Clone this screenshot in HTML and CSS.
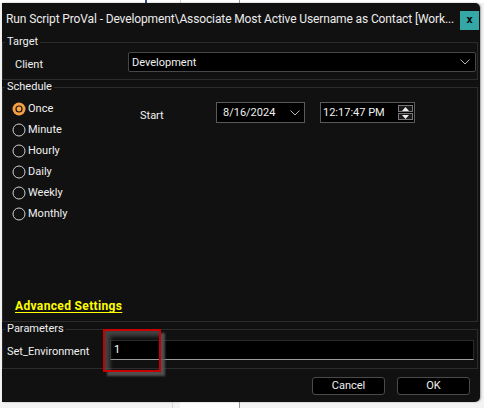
FILE: index.html
```html
<!DOCTYPE html>
<html>
<head>
<meta charset="utf-8">
<link rel="stylesheet" href="styles.css">
</head>
<body>
<div class="desk-top"></div>
<div class="window">
  <div class="titlebar">
    <div class="title">Run Script ProVal - Development\Associate Most Active Username as Contact [Work...</div>
    <div class="close">x</div>
  </div>

  <fieldset class="group group-target">
    <legend>Target</legend>
    <div class="client-row">
      <div class="client-label">Client</div>
      <div class="select">
        <span>Development</span>
        <svg class="chev" width="10" height="6" viewBox="0 0 10 6"><polyline points="0.5,0.5 5,5 9.5,0.5" fill="none" stroke="#b5b5b5" stroke-width="1"/></svg>
      </div>
    </div>
  </fieldset>

  <fieldset class="group group-schedule">
    <legend>Schedule</legend>
    <div class="schedule-body">
      <div class="schedule-top">
        <div class="radios">
          <div class="radio-row">
            <svg class="radio" width="14" height="14" viewBox="0 0 14 14"><circle cx="7" cy="7" r="6.5" fill="#f5a043"/><circle cx="7" cy="7" r="3.6" fill="#1a1208"/><circle cx="7" cy="7" r="2.4" fill="#f7a64a"/></svg>
            <span>Once</span>
          </div>
          <div class="radio-row">
            <svg class="radio" width="14" height="14" viewBox="0 0 14 14"><circle cx="7" cy="7" r="6" fill="none" stroke="#d0d0d0" stroke-width="1"/></svg>
            <span>Minute</span>
          </div>
          <div class="radio-row">
            <svg class="radio" width="14" height="14" viewBox="0 0 14 14"><circle cx="7" cy="7" r="6" fill="none" stroke="#d0d0d0" stroke-width="1"/></svg>
            <span>Hourly</span>
          </div>
          <div class="radio-row">
            <svg class="radio" width="14" height="14" viewBox="0 0 14 14"><circle cx="7" cy="7" r="6" fill="none" stroke="#d0d0d0" stroke-width="1"/></svg>
            <span>Daily</span>
          </div>
          <div class="radio-row">
            <svg class="radio" width="14" height="14" viewBox="0 0 14 14"><circle cx="7" cy="7" r="6" fill="none" stroke="#d0d0d0" stroke-width="1"/></svg>
            <span>Weekly</span>
          </div>
          <div class="radio-row">
            <svg class="radio" width="14" height="14" viewBox="0 0 14 14"><circle cx="7" cy="7" r="6" fill="none" stroke="#d0d0d0" stroke-width="1"/></svg>
            <span>Monthly</span>
          </div>
        </div>
        <div class="start-label">Start</div>
        <div class="datebox">
          <span>8/16/2024</span>
          <svg class="chev" width="10" height="6" viewBox="0 0 10 6"><polyline points="0.5,0.5 5,5 9.5,0.5" fill="none" stroke="#b5b5b5" stroke-width="1"/></svg>
        </div>
        <div class="timebox">
          <span>12:17:47 PM</span>
          <div class="spin">
            <div class="spin-btn"><svg width="7" height="4" viewBox="0 0 7 4"><polygon points="3.5,0 7,4 0,4" fill="#f0f0f0"/></svg></div>
            <div class="spin-btn"><svg width="7" height="4" viewBox="0 0 7 4"><polygon points="0,0 7,0 3.5,4" fill="#f0f0f0"/></svg></div>
          </div>
        </div>
      </div>
      <div class="advanced">Advanced Settings</div>
    </div>
  </fieldset>

  <fieldset class="group group-params">
    <legend>Parameters</legend>
    <div class="param-row">
      <div class="param-label">Set_Environment</div>
      <div class="param-input">1</div>
    </div>
  </fieldset>

  <div class="buttons">
    <div class="btn">Cancel</div>
    <div class="btn">OK</div>
  </div>

  <div class="highlight"></div>
</div>
<div class="desk-bottom"></div>
</body>
</html>
```

FILE: styles.css
```css
html, body {
  margin: 0;
  padding: 0;
}
body {
  width: 484px;
  height: 408px;
  overflow: hidden;
  background: #f3f3f3;
  font-family: Roboto, "Noto Sans", "DejaVu Sans", sans-serif;
  font-size: 11px;
  color: #f0f0f0;
}
.desk-top {
  height: 3px;
  background:
    linear-gradient(#3a4a8a, #3a4a8a) 145px 0 / 2px 3px no-repeat,
    linear-gradient(#d0d0d0, #d0d0d0) 180px 0 / 1px 3px no-repeat,
    linear-gradient(#9a9a9a, #9a9a9a) 239px 0 / 1px 3px no-repeat,
    #ffffff;
}
.desk-bottom {
  height: 6px;
  background:
    linear-gradient(#d8d8d8, #d8d8d8) 172px 0 / 1px 6px no-repeat,
    linear-gradient(#ffffff, #ffffff) 180px 0 / 59px 6px no-repeat,
    linear-gradient(#9a9a9a, #9a9a9a) 239px 0 / 1px 6px no-repeat,
    #f3f3f3;
}
.window {
  position: relative;
  margin-left: 2px;
  width: 478px;
  height: 399px;
  background: #111111;
  border-radius: 0 5px 5px 0;
  box-shadow: 1px 0 2px rgba(0, 0, 0, 0.35);
  display: flex;
  flex-direction: column;
}
.titlebar {
  height: 32px;
  display: flex;
  align-items: center;
  flex-shrink: 0;
}
.title {
  flex: 1;
  min-width: 0;
  padding-left: 4px;
  white-space: nowrap;
  overflow: hidden;
  font-size: 12px;
  letter-spacing: -0.12px;
  color: #ececec;
}
.close {
  flex-shrink: 0;
  align-self: flex-start;
  margin-top: 8px;
  margin-right: 1px;
  width: 19px;
  height: 19px;
  background: #36a7a7;
  color: #000;
  font-family: "DejaVu Sans Mono", monospace;
  font-weight: bold;
  font-size: 11px;
  line-height: 18px;
  text-align: center;
}
.group {
  margin: 0 2px 0 0;
  padding: 0;
  border: 1px solid #2c2c2c;
  min-width: 0;
  flex-shrink: 0;
}
.group legend {
  margin-left: 2px;
  padding: 0 2px;
  font-size: 11px;
  line-height: 14px;
  color: #efefef;
}
.group-target {
  height: 45px;
  box-sizing: border-box;
}
.client-row {
  display: flex;
  align-items: center;
  margin-top: 3px;
}
.client-label {
  width: 113px;
  padding-left: 12px;
  padding-top: 5px;
}
.select {
  flex: 1;
  margin-right: 1px;
  height: 20px;
  box-sizing: border-box;
  border: 1px solid #474747;
  border-radius: 2px;
  background: #000;
  display: flex;
  align-items: center;
  justify-content: space-between;
  padding: 0 5px 0 3px;
}
.group-schedule {
  height: 242px;
  box-sizing: border-box;
}
.schedule-body {
  height: 227px;
  display: flex;
  flex-direction: column;
}
.schedule-top {
  display: flex;
  align-items: flex-start;
}
.radios {
  width: 128px;
  padding-left: 9px;
  padding-top: 4px;
}
.radio-row {
  height: 21px;
  display: flex;
  align-items: center;
}
.radio {
  width: 14px;
  height: 14px;
  margin-right: 2px;
}
.start-label {
  width: 76px;
  padding-top: 15px;
}
.datebox {
  margin-top: 8px;
  width: 89px;
  height: 21px;
  box-sizing: border-box;
  border: 1px solid #5a5a5a;
  background: #000;
  display: flex;
  align-items: center;
  justify-content: space-between;
  padding: 0 4px 0 6px;
  margin-right: 15px;
}
.timebox {
  margin-top: 8px;
  width: 95px;
  height: 21px;
  box-sizing: border-box;
  border: 1px solid #5a5a5a;
  background: #000;
  display: flex;
  align-items: center;
  justify-content: space-between;
  padding: 0 1px 0 2px;
}
.spin {
  display: flex;
  flex-direction: column;
  gap: 1px;
}
.spin-btn {
  width: 15px;
  height: 7px;
  box-sizing: border-box;
  border: 1px solid #777;
  background: #1a1a1a;
  display: flex;
  align-items: center;
  justify-content: center;
}
.advanced {
  margin-top: auto;
  margin-left: 12px;
  margin-bottom: 7px;
  align-self: flex-start;
  line-height: 16px;
  font-weight: bold;
  font-size: 12px;
  letter-spacing: 0.35px;
  color: #ffff00;
  text-decoration: underline;
  text-underline-offset: 2px;
}
.group-params {
  height: 47px;
  box-sizing: border-box;
}
.param-row {
  display: flex;
  align-items: flex-start;
  margin-top: 4px;
}
.param-label {
  width: 103px;
  padding-left: 4px;
  padding-top: 5px;
}
.param-input {
  flex: 1;
  margin-right: 3px;
  height: 20px;
  box-sizing: border-box;
  background: #000;
  border: 1px solid #2a2a2a;
  border-bottom: 1px solid #9c9c9c;
  padding: 0 3px;
  line-height: 17px;
  color: #fff;
}
.buttons {
  display: flex;
  justify-content: flex-end;
  gap: 12px;
  padding: 8px 10px 0 0;
}
.btn {
  width: 73px;
  height: 18px;
  box-sizing: border-box;
  border: 1px solid #4a4a4a;
  border-radius: 3px;
  background: #000;
  text-align: center;
  line-height: 16px;
  color: #f0f0f0;
}
.highlight {
  position: absolute;
  left: 101px;
  top: 326px;
  width: 58px;
  height: 43px;
  box-sizing: border-box;
  border: 2px solid #c80000;
  box-shadow: inset 5px 5px 4px rgba(110, 110, 110, 0.55), 4px 4px 2px rgba(90, 90, 90, 0.85);
}
```
